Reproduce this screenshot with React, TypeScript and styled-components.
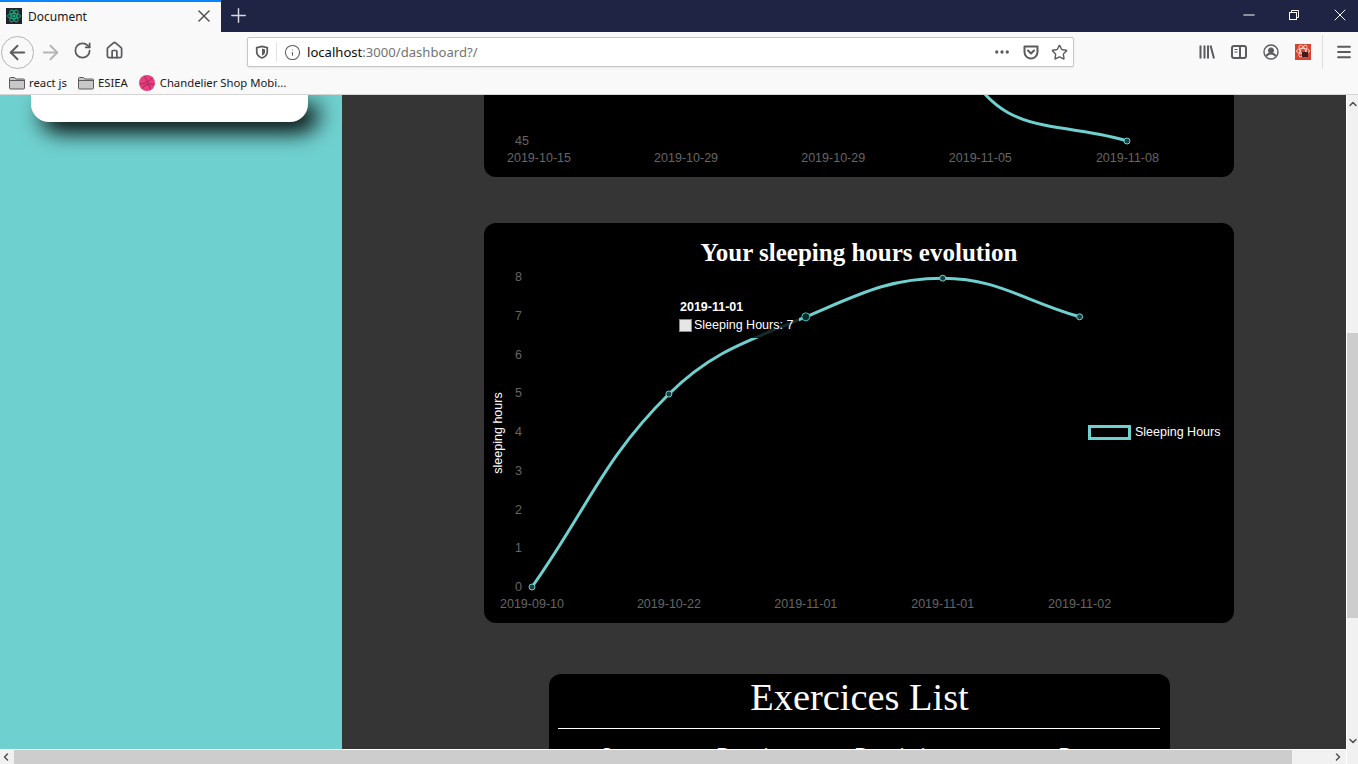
import React from "react";
import styled, { createGlobalStyle } from "styled-components";
import {
  ArrowLeft,
  ArrowRight,
  ChevronDown,
  ChevronLeft,
  ChevronRight,
  ChevronUp,
  Home,
  Info,
  Menu,
  Minus,
  MoreHorizontal,
  Plus,
  RotateCw,
  Star,
  X,
} from "lucide-react";

const GlobalStyle = createGlobalStyle`
  html, body {
    margin: 0;
    padding: 0;
    overflow: hidden;
    background: #353535;
  }
`;

const Page = styled.div`
  width: 1358px;
  height: 764px;
  display: flex;
  flex-direction: column;
  overflow: hidden;
  font-family: "Noto Sans", "Liberation Sans", sans-serif;
`;

const TabStrip = styled.div`
  height: 32px;
  flex: none;
  display: flex;
  align-items: center;
  background: #1f2445;
  color: #fff;
`;

const Tab = styled.div`
  width: 221px;
  height: 32px;
  box-sizing: border-box;
  display: flex;
  align-items: center;
  padding: 0 7px 2px 6px;
  background: #f9f9fa;
  border-top: 2px solid #0a84ff;
  color: #18181a;
  font-size: 12px;
`;

const TabTitle = styled.span`
  flex: 1;
  margin-left: 6px;
`;

const NewTab = styled.div`
  width: 34px;
  display: flex;
  justify-content: center;
  margin-bottom: 2px;
  color: #d8d9e0;
`;

const WindowControls = styled.div`
  margin-left: auto;
  margin-bottom: 2px;
  display: flex;
  align-items: center;
  gap: 28px;
  padding-right: 8px;
  color: #fff;
`;

const Toolbar = styled.div`
  height: 40px;
  flex: none;
  display: flex;
  align-items: center;
  background: #f9f9fa;
  color: #5b5b5d;
`;

const BackButton = styled.div`
  width: 33px;
  height: 33px;
  margin-left: 1px;
  border: 1px solid #b4b4b4;
  border-radius: 50%;
  display: flex;
  align-items: center;
  justify-content: center;
  box-sizing: border-box;
  background: #f9f9fa;
`;

const NavButton = styled.div<{ $dim?: boolean }>`
  width: 32px;
  display: flex;
  justify-content: center;
  color: ${(p) => (p.$dim ? "#b5b5b6" : "#5b5b5d")};
`;

const NavButtons = styled.div`
  display: flex;
  width: 213px;
`;

const UrlBar = styled.div`
  width: 827px;
  height: 30px;
  box-sizing: border-box;
  display: flex;
  align-items: center;
  background: #fff;
  border: 1px solid #c6c6c8;
  border-radius: 2px;
  box-shadow: 0 1px 2px rgba(0, 0, 0, 0.08);
`;

const ShieldBox = styled.div`
  width: 28px;
  height: 20px;
  display: flex;
  align-items: center;
  justify-content: center;
  border-right: 1px solid #e2e2e3;
`;

const InfoBox = styled.div`
  width: 30px;
  display: flex;
  justify-content: center;
`;

const UrlText = styled.span`
  flex: 1;
  font-size: 13.1px;
  color: #737373;
`;

const UrlHost = styled.span`
  color: #0c0c0d;
`;

const UrlActions = styled.div`
  display: flex;
  align-items: center;
  gap: 12px;
  padding-right: 5px;
`;

const ToolIcons = styled.div`
  margin-left: 125px;
  display: flex;
  align-items: center;
  gap: 16px;
`;

const ToolDivider = styled.div`
  width: 1px;
  height: 34px;
  margin: 0 12px 0 11px;
  background: #dedee0;
`;

const BookmarksBar = styled.div`
  height: 23px;
  flex: none;
  box-sizing: border-box;
  display: flex;
  align-items: center;
  gap: 11px;
  padding: 0 0 1px 9px;
  background: #f9f9fa;
  border-bottom: 1px solid #d6d6d7;
  font-size: 11.3px;
  color: #18181a;
`;

const Bookmark = styled.div`
  display: flex;
  align-items: center;
  gap: 4px;
`;

const DribbbleBookmark = styled(Bookmark)`
  gap: 5px;
`;

const Viewport = styled.div`
  flex: 1;
  min-height: 0;
  display: flex;
`;

const ViewportLeft = styled.div`
  flex: 1;
  min-width: 0;
  display: flex;
  flex-direction: column;
`;

const ViewportRow = styled.div`
  flex: 1;
  min-height: 0;
  display: flex;
`;

const Sidebar = styled.aside`
  width: 342px;
  flex: none;
  box-sizing: border-box;
  padding-left: 31px;
  background: #6fd1cf;
  overflow: hidden;
`;

const ProfileCard = styled.div`
  width: 277px;
  height: 27px;
  background: #fff;
  border-radius: 0 0 18px 18px;
  box-shadow: 10px 10px 22px #000;
`;

const Main = styled.main`
  flex: 1;
  min-width: 0;
  padding-left: 142px;
  background: #353535;
  overflow: hidden;
`;

const Column = styled.div`
  width: 750px;
  display: flex;
  flex-direction: column;
  align-items: center;
`;

const ChartCard = styled.section<{ $clipped?: boolean }>`
  position: relative;
  width: 750px;
  height: ${(p) => (p.$clipped ? "82px" : "400px")};
  margin-top: ${(p) => (p.$clipped ? "0" : "46px")};
  background: #000;
  border-radius: ${(p) => (p.$clipped ? "0 0 12px 12px" : "12px")};
  overflow: hidden;
`;

const ChartTitle = styled.h2`
  margin: 0;
  height: 46px;
  padding-top: 14px;
  box-sizing: border-box;
  text-align: center;
  font: bold 25px/32px "Liberation Serif", serif;
  color: #fff;
`;

const ChartSvg = styled.svg`
  display: block;
  font-family: "Liberation Sans", Arial, sans-serif;
  font-size: 12.5px;
`;

const Tooltip = styled.div`
  position: absolute;
  left: 189px;
  top: 72px;
  width: 126px;
  height: 43px;
  box-sizing: border-box;
  padding: 3px 7px;
  background: rgba(0, 0, 0, 0.8);
  border-radius: 6px;
  color: #fff;
  font: 12.5px/18px "Liberation Sans", Arial, sans-serif;
`;

const TooltipTitle = styled.div`
  font-weight: bold;
`;

const TooltipRow = styled.div`
  display: flex;
  align-items: center;
  white-space: nowrap;
`;

const TooltipSwatch = styled.span`
  flex: none;
  width: 13px;
  height: 13px;
  box-sizing: border-box;
  margin: 0 2px 0 -1px;
  background: #e6e6e6;
  border: 1px solid #5a9e9d;
`;

const ListCard = styled.section`
  width: 621px;
  height: 100px;
  flex: none;
  margin-top: 51px;
  box-sizing: border-box;
  padding: 0 10px 0 9px;
  background: #000;
  border-radius: 12px;
  color: #fff;
  font-family: "Liberation Serif", serif;
`;

const ListTitle = styled.h1`
  margin: 0;
  height: 54px;
  border-bottom: 1px solid #fff;
  text-align: center;
  text-indent: 2px;
  font-size: 38.4px;
  font-weight: normal;
  line-height: 46px;
`;

const ListHead = styled.div`
  display: grid;
  grid-template-columns: 116px 138px 204px 1fr;
  padding: 16px 0 0 44px;
  font-size: 18px;
  font-weight: bold;
  line-height: 20px;
`;

const VScrollbar = styled.div`
  width: 12px;
  flex: none;
  box-sizing: border-box;
  display: flex;
  flex-direction: column;
  align-items: center;
  background: #f1f1f1;
  border-left: 1px solid #fff;
  color: #505050;
  padding: 3px 0 17px;
`;

const VThumb = styled.div`
  width: 100%;
  height: 285px;
  margin: 223px 0 auto;
  background: #cdcdcd;
`;

const HScrollbar = styled.div`
  height: 15px;
  flex: none;
  box-sizing: border-box;
  display: flex;
  align-items: center;
  padding-right: 2px;
  background: #f1f1f1;
  border-top: 1px solid #fff;
  color: #505050;
`;

const HThumb = styled.div`
  width: 1278px;
  height: 14px;
  margin: 0 auto 0 2px;
  background: #cdcdcd;
`;

const TEAL = "#6fd1cf";
const AXIS = "#666";

type Pt = { x: number; y: number };

// same bezier tension chart.js uses for its line charts
const splinePath = (pts: Pt[], t = 0.4) => {
  const ctrl = pts.map((cur, i) => {
    const prev = pts[i - 1] || cur;
    const next = pts[i + 1] || cur;
    const d01 = Math.hypot(cur.x - prev.x, cur.y - prev.y);
    const d12 = Math.hypot(next.x - cur.x, next.y - cur.y);
    const total = d01 + d12 || 1;
    const fa = (t * d01) / total;
    const fb = (t * d12) / total;
    return {
      px: cur.x - fa * (next.x - prev.x),
      py: cur.y - fa * (next.y - prev.y),
      nx: cur.x + fb * (next.x - prev.x),
      ny: cur.y + fb * (next.y - prev.y),
    };
  });
  let d = `M${pts[0].x} ${pts[0].y}`;
  for (let i = 1; i < pts.length; i++) {
    d += ` C${ctrl[i - 1].nx} ${ctrl[i - 1].ny} ${ctrl[i].px} ${ctrl[i].py} ${pts[i].x} ${pts[i].y}`;
  }
  return d;
};

const sleepValues = [0, 5, 7, 8, 7];
const sleepDates = ["2019-09-10", "2019-10-22", "2019-11-01", "2019-11-01", "2019-11-02"];
const sleepPoints = sleepValues.map((v, i) => ({ x: 48 + i * 136.9, y: 364 - v * 38.6 }));
const weightDates = ["2019-10-15", "2019-10-29", "2019-10-29", "2019-11-05", "2019-11-08"];

const WeightChart = () => (
  <ChartSvg width={750} height={82} viewBox="0 0 750 82">
    <text x={45} y={50} fill={AXIS} textAnchor="end">45</text>
    {weightDates.map((d, i) => (
      <text key={i} x={55 + i * 147.1} y={67} fill={AXIS} textAnchor="middle">{d}</text>
    ))}
    <path d="M498 -4 C514 14 530 24 560 30 C590 36 620 38 643 46" fill="none" stroke={TEAL} strokeWidth={3} />
    <circle cx={643} cy={46} r={3} fill="#1f3f3e" stroke={TEAL} />
  </ChartSvg>
);

const SleepChart = () => (
  <ChartSvg width={750} height={354} viewBox="0 46 750 354">
    {[0, 1, 2, 3, 4, 5, 6, 7, 8].map((v) => (
      <text key={v} x={38} y={368 - v * 38.75} fill={AXIS} textAnchor="end">{v}</text>
    ))}
    {sleepDates.map((d, i) => (
      <text key={i} x={sleepPoints[i].x} y={385} fill={AXIS} textAnchor="middle">{d}</text>
    ))}
    <text transform="translate(18 210) rotate(-90)" fill="#fff" textAnchor="middle">sleeping hours</text>
    <path d={splinePath(sleepPoints)} fill="none" stroke={TEAL} strokeWidth={3} />
    {sleepPoints.map((p, i) => (
      <circle key={i} cx={p.x} cy={p.y} r={i === 2 ? 4 : 3} fill={i === 2 ? "#062a29" : "#1f3f3e"} stroke={i === 2 ? "#3fc6c4" : TEAL} />
    ))}
    <rect x={605.5} y={203.5} width={40} height={12} fill="#000" stroke={TEAL} strokeWidth={3} />
    <text x={651} y={213} fill="#fff">Sleeping Hours</text>
  </ChartSvg>
);

const ReactFavicon = () => (
  <svg width="16" height="16" viewBox="0 0 16 16">
    <rect width="16" height="16" fill="#20232a" />
    <g fill="none" stroke="#18a87f" strokeWidth="1">
      <ellipse cx="8" cy="8" rx="6.5" ry="2.6" />
      <ellipse cx="8" cy="8" rx="6.5" ry="2.6" transform="rotate(60 8 8)" />
      <ellipse cx="8" cy="8" rx="6.5" ry="2.6" transform="rotate(120 8 8)" />
    </g>
    <circle cx="8" cy="8" r="1.6" fill="#18a87f" />
  </svg>
);

const RestoreIcon = () => (
  <svg width="16" height="16" viewBox="-2 -2 16 16" fill="none" stroke="#fff">
    <rect x="1.5" y="3.5" width="7" height="7" />
    <path d="M3.5 3.5V1.5H10.5V8.5H8.5" />
  </svg>
);

const ShieldIcon = () => (
  <svg width="14" height="14" viewBox="0 0 16 16">
    <path d="M8 1.5 14 3v5c0 3.4-2.6 5.5-6 6.8C4.6 13.5 2 11.4 2 8V3Z" fill="none" stroke="#5b5b5d" strokeWidth="2" />
    <path d="M8 4 11.5 5v3c0 2-1.5 3.3-3.5 4.2Z" fill="#5b5b5d" />
  </svg>
);

const PocketIcon = () => (
  <svg width="16" height="16" viewBox="0 0 16 16" fill="none" stroke="#5b5b5d" strokeWidth="2">
    <path d="M1.5 2.5h13v5.5a6.5 6.5 0 0 1-13 0Z" strokeLinejoin="round" />
    <path d="M5 6.5 8 9.5 11 6.5" strokeLinecap="round" strokeLinejoin="round" />
  </svg>
);

const LibraryIcon = () => (
  <svg width="16" height="16" viewBox="0 0 16 16" stroke="#5b5b5d" strokeWidth="2">
    <path d="M1.5 1.5V14.5M5.5 1.5V14.5M9 1.5V14.5M11.5 1.5 15 14.5" fill="none" />
  </svg>
);

const SidebarIcon = () => (
  <svg width="16" height="16" viewBox="0 0 16 16" fill="none" stroke="#5b5b5d" strokeWidth="2">
    <rect x="1" y="2" width="14" height="12" rx="2" />
    <path d="M9 2V14" />
    <path d="M3.5 5.5H6.5M3.5 8H6.5" strokeWidth="1" />
  </svg>
);

const AccountIcon = () => (
  <svg width="16" height="16" viewBox="0 0 16 16" fill="none" stroke="#5b5b5d">
    <circle cx="8" cy="8" r="7" strokeWidth="1.4" />
    <circle cx="8" cy="6.5" r="2.6" fill="#5b5b5d" />
    <path d="M3.5 12c1-2 3-2.5 4.5-2.5s3.5.5 4.5 2.5" strokeWidth="2" />
  </svg>
);

const ExtensionIcon = () => (
  <svg width="16" height="16" viewBox="0 0 16 16">
    <rect width="16" height="16" fill="#d8432f" />
    <g fill="none" stroke="#f3d6d0" strokeWidth="0.9">
      <ellipse cx="8" cy="7" rx="6.5" ry="2.6" />
      <ellipse cx="8" cy="7" rx="6.5" ry="2.6" transform="rotate(60 8 7)" />
      <ellipse cx="8" cy="7" rx="6.5" ry="2.6" transform="rotate(120 8 7)" />
    </g>
    <path d="M7 8h6v5H7Z" fill="#3a1d1a" />
  </svg>
);

const FolderIcon = () => (
  <svg width="16" height="14" viewBox="0 0 16 14">
    <path d="M.5 2.5a1 1 0 0 1 1-1h4l1.5 1.5h7.5a1 1 0 0 1 1 1v8a1 1 0 0 1-1 1h-13a1 1 0 0 1-1-1Z" fill="#c8c8c9" stroke="#5b5b5d" />
    <path d="M.5 4.5h15" stroke="#5b5b5d" />
  </svg>
);

const DribbbleIcon = () => (
  <svg width="16" height="16" viewBox="0 0 16 16">
    <circle cx="8" cy="8" r="8" fill="#e63f7e" />
    <g fill="none" stroke="#a81f56" strokeWidth="0.9">
      <path d="M5 1C8 5 10.5 10 11.5 15" />
      <path d="M1 9C5 9 11 6 13.5 2.5" />
      <path d="M3 13.5C5 10 10 8 15.5 9.5" />
    </g>
  </svg>
);

const App = () => (
  <Page>
    <GlobalStyle />
    <TabStrip>
      <Tab>
        <ReactFavicon />
        <TabTitle>Document</TabTitle>
        <X size={20} strokeWidth={1.8} color="#505052" />
      </Tab>
      <NewTab>
        <Plus size={23} strokeWidth={1.5} />
      </NewTab>
      <WindowControls>
        <Minus size={18} strokeWidth={1.3} />
        <RestoreIcon />
        <X size={20} strokeWidth={1.2} />
      </WindowControls>
    </TabStrip>
    <Toolbar>
      <BackButton>
        <ArrowLeft size={23} strokeWidth={2} />
      </BackButton>
      <NavButtons>
        <NavButton $dim>
          <ArrowRight size={23} strokeWidth={2} />
        </NavButton>
        <NavButton>
          <RotateCw size={19} strokeWidth={2.2} />
        </NavButton>
        <NavButton>
          <Home size={19} strokeWidth={2.2} />
        </NavButton>
      </NavButtons>
      <UrlBar>
        <ShieldBox>
          <ShieldIcon />
        </ShieldBox>
        <InfoBox>
          <Info size={17} strokeWidth={1.5} />
        </InfoBox>
        <UrlText>
          <UrlHost>localhost</UrlHost>:3000/dashboard?/
        </UrlText>
        <UrlActions>
          <MoreHorizontal size={18} strokeWidth={2.4} />
          <PocketIcon />
          <Star size={17} strokeWidth={2} />
        </UrlActions>
      </UrlBar>
      <ToolIcons>
        <LibraryIcon />
        <SidebarIcon />
        <AccountIcon />
        <ExtensionIcon />
      </ToolIcons>
      <ToolDivider />
      <Menu size={18} strokeWidth={2.4} />
    </Toolbar>
    <BookmarksBar>
      <Bookmark>
        <FolderIcon />
        react js
      </Bookmark>
      <Bookmark>
        <FolderIcon />
        ESIEA
      </Bookmark>
      <DribbbleBookmark>
        <DribbbleIcon />
        Chandelier Shop Mobi...
      </DribbbleBookmark>
    </BookmarksBar>
    <Viewport>
      <ViewportLeft>
        <ViewportRow>
          <Sidebar>
            <ProfileCard />
          </Sidebar>
          <Main>
            <Column>
              <ChartCard $clipped>
                <WeightChart />
              </ChartCard>
              <ChartCard>
                <ChartTitle>Your sleeping hours evolution</ChartTitle>
                <SleepChart />
                <Tooltip>
                  <TooltipTitle>2019-11-01</TooltipTitle>
                  <TooltipRow>
                    <TooltipSwatch />
                    Sleeping Hours: 7
                  </TooltipRow>
                </Tooltip>
              </ChartCard>
              <ListCard>
                <ListTitle>Exercices List</ListTitle>
                <ListHead>
                  <span>Sport</span>
                  <span>Duration</span>
                  <span>Description</span>
                  <span>Date</span>
                </ListHead>
              </ListCard>
            </Column>
          </Main>
        </ViewportRow>
        <HScrollbar>
          <ChevronLeft size={12} strokeWidth={3} />
          <HThumb />
          <ChevronRight size={12} strokeWidth={3} />
        </HScrollbar>
      </ViewportLeft>
      <VScrollbar>
        <ChevronUp size={12} strokeWidth={3} />
        <VThumb />
        <ChevronDown size={12} strokeWidth={3} />
      </VScrollbar>
    </Viewport>
  </Page>
);

export default App;
